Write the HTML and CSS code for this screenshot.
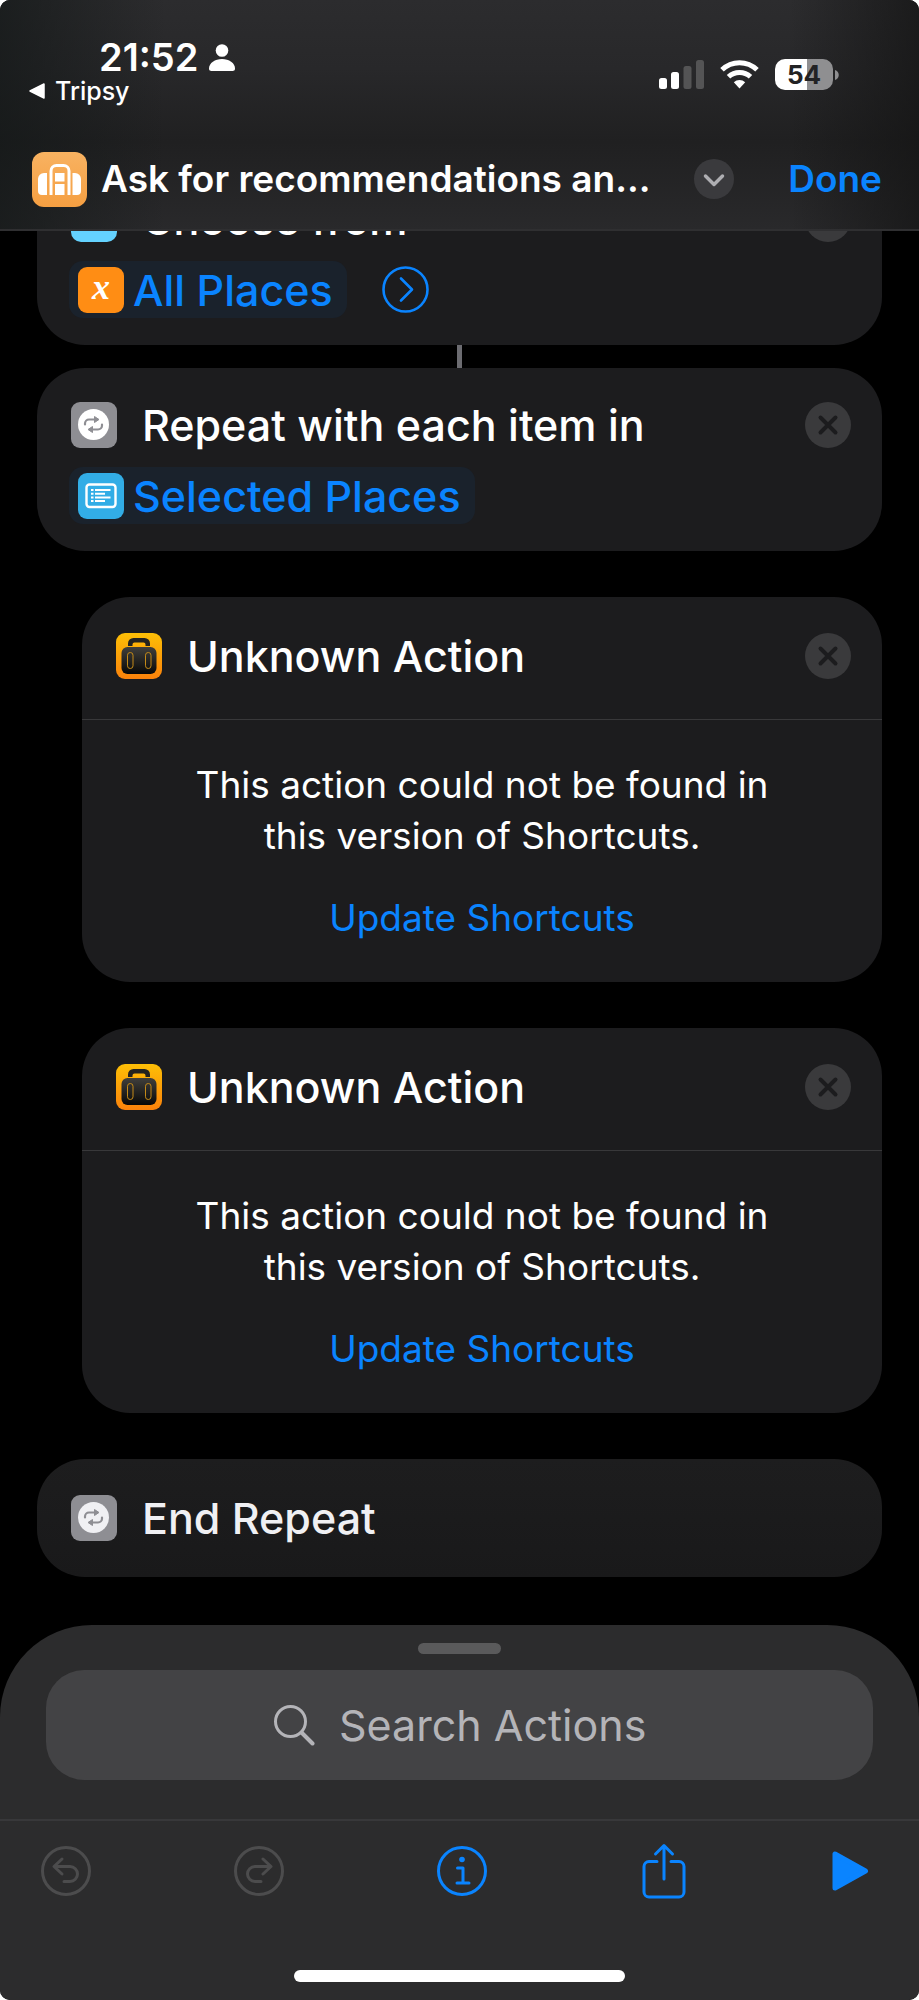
FILE: index.html
```html
<!DOCTYPE html>
<html lang="en">
<head>
<meta charset="utf-8">
<meta name="viewport" content="width=device-width, initial-scale=1">
<title>Shortcuts</title>
<link rel="stylesheet" href="styles.css">
</head>
<body>
<svg class="defs" aria-hidden="true">
  <defs>
    <linearGradient id="peach" x1="0" y1="0" x2="0" y2="1"><stop offset="0" stop-color="#f8b261"/><stop offset="1" stop-color="#f59f42"/></linearGradient>
    <linearGradient id="amber" x1="0" y1="0" x2="0" y2="1"><stop offset="0" stop-color="#fdbf06"/><stop offset="1" stop-color="#fb820b"/></linearGradient>
    <linearGradient id="leather" x1="0" y1="0" x2="0" y2="1"><stop offset="0" stop-color="#403f3c"/><stop offset="1" stop-color="#080808"/></linearGradient>
    <symbol id="repeat" viewBox="0 0 46 46">
      <rect width="46" height="46" rx="9" fill="#8e8e93"/>
      <circle cx="22.500" cy="22.500" r="15.500" fill="currentColor"/>
      <g fill="none" stroke="#8e8e93" stroke-width="2.200" stroke-linecap="round">
        <path d="M14 22.500v-1a4 4 0 0 1 4-4h6M31 22.500v1a4 4 0 0 1-4 4h-6"/>
      </g>
      <path d="M23.500 14.500l4.500 3-4.500 3zM21.500 24.500l-4.500 3 4.500 3z" fill="#8e8e93" stroke="#8e8e93" stroke-linejoin="round"/>
    </symbol>
    <symbol id="close" viewBox="0 0 46 46">
      <circle cx="23" cy="23" r="23" fill="#3a3a3c"/>
      <path d="M15.500 15.500l15 15M30.500 15.500l-15 15" stroke="#1c1c1e" stroke-width="4" stroke-linecap="round"/>
    </symbol>
    <symbol id="suitcase" viewBox="0 0 46 46">
      <rect width="46" height="46" rx="9" fill="url(#amber)"/>
      <path d="M12 13v-2.500a5.500 5.500 0 0 1 5.500-5.500h11a5.500 5.500 0 0 1 5.500 5.500V13h-4.500v-1.500a2 2 0 0 0-2-2h-9a2 2 0 0 0-2 2V13z" fill="#23221f"/>
      <rect x="5.500" y="14" width="35" height="27" rx="6" fill="url(#leather)"/>
      <g fill="none" stroke="#c48a18" stroke-width="1"><rect x="11.500" y="19.500" width="5.500" height="16" rx="2.700"/><rect x="29.500" y="19.500" width="5.500" height="16" rx="2.700"/></g>
    </symbol>
  </defs>
</svg>
<div class="app">
  <header class="header">
    <div class="status">
      <div class="status-left">
        <div class="clock">21:52
          <svg class="person" viewBox="0 0 26 27" fill="#fff" aria-hidden="true"><circle cx="13" cy="6.500" r="6.300"/><path d="M0 24.500C0 19 6 15 13 15s13 4 13 9.500c0 1.800-1 2.500-2.500 2.500h-21C1 27 0 26.300 0 24.500z"/></svg>
        </div>
        <a class="back" href="#"><svg class="back-arrow" viewBox="0 0 16 16" aria-hidden="true"><path d="M1 8L15 1v14z" fill="#fff" stroke="#fff" stroke-width="1.500" stroke-linejoin="round"/></svg>Tripsy</a>
      </div>
      <div class="status-right">
        <svg class="signal" viewBox="0 0 45 29" aria-hidden="true"><g fill="#fff"><rect y="18" width="8" height="11" rx="2.500"/><rect x="12" y="12" width="8" height="17" rx="2.500"/></g><g fill="#545455"><rect x="24.500" y="6" width="8" height="23" rx="2.500"/><rect x="37" width="8" height="29" rx="2.500"/></g></svg>
        <svg class="wifi" viewBox="0 0 39 29" aria-hidden="true"><g fill="none" stroke="#fff" stroke-width="5"><path d="M2 9.800a25 25 0 0 1 35 0"/><path d="M8.500 16.800a16 16 0 0 1 22 0"/></g><path d="M13.800 22.200a8.300 8.300 0 0 1 11.400 0L19.500 28.500z" fill="#fff"/></svg>
        <div class="battery"><span class="battery-level">54</span><svg class="battery-tip" viewBox="0 0 4 10" aria-hidden="true"><path d="M0 0c5 1.500 5 8.500 0 10z" fill="#8f8f91"/></svg></div>
      </div>
    </div>
    <div class="titlebar">
      <svg class="app-icon" viewBox="0 0 55 55" aria-hidden="true">
        <rect width="55" height="55" rx="12" fill="url(#peach)"/>
        <g fill="#fff"><path d="M15 21v22h-5a4 4 0 0 1-4-4V27a6 6 0 0 1 6-6zM40.500 21v22H45a4 4 0 0 0 4-4V27a6 6 0 0 0-6-6z"/><rect x="23" y="21" width="9.500" height="8.500"/><rect x="23" y="32" width="9.500" height="11"/></g>
        <path d="M19 43V19a5.500 5.500 0 0 1 5.500-5.500h7A5.500 5.500 0 0 1 37 19v24" fill="none" stroke="#fff" stroke-width="3"/>
      </svg>
      <h1 class="title">Ask for recommendations an...</h1>
      <button class="icon-btn" type="button" aria-label="Shortcut options"><svg class="chevron" viewBox="0 0 40 40"><circle cx="20" cy="20" r="20" fill="#3a3a3d"/><path d="M11.500 17L20 25.500 28.500 17" fill="none" stroke="#aeaeb2" stroke-width="3.500" stroke-linecap="round" stroke-linejoin="round"/></svg></button>
      <button class="done" type="button">Done</button>
    </div>
  </header>

  <main class="actions">
    <section class="card card-param">
      <div class="row">
        <svg class="icon" viewBox="0 0 46 46" aria-hidden="true"><rect width="46" height="46" rx="10" fill="#64d2ff"/><path d="M11 33h24" stroke="#fff" stroke-width="3"/></svg>
        <span class="name">Choose from</span>
        <button class="icon-btn" type="button" aria-label="Remove action"><svg class="icon"><use href="#close"/></svg></button>
      </div>
      <div class="row-token">
        <button class="token" type="button">
          <svg class="icon" viewBox="0 0 46 46" aria-hidden="true"><rect width="46" height="46" rx="9" fill="#ff8d14"/><text class="var-x" x="23" y="32" text-anchor="middle">x</text></svg>All Places</button>
        <button class="icon-btn" type="button" aria-label="Show more"><svg class="more" viewBox="0 0 47 47" fill="none" stroke="#0a84ff" stroke-width="2.600" stroke-linecap="round" stroke-linejoin="round"><circle cx="23.500" cy="23.500" r="22"/><path d="M19 12.500L30 23.500 19 34.500"/></svg></button>
      </div>
    </section>
    <div class="link-line"></div>
    <section class="card card-param">
      <div class="row">
        <svg class="icon" aria-hidden="true"><use href="#repeat"/></svg>
        <span class="name">Repeat with each item in</span>
        <button class="icon-btn" type="button" aria-label="Remove action"><svg class="icon"><use href="#close"/></svg></button>
      </div>
      <div class="row-token">
        <button class="token" type="button">
          <svg class="icon" viewBox="0 0 46 46" aria-hidden="true"><rect width="46" height="46" rx="9" fill="#32ade6"/><rect x="8.500" y="11.500" width="29" height="22.500" rx="3" fill="none" stroke="#fff" stroke-width="2.400"/><path d="M17 17h15.500M17 20.700h10M17 24.400h15.500M17 28.100h10" stroke="#fff" stroke-width="2"/><path d="M13 17h2.500M13 20.700h2.500M13 24.400h2.500M13 28.100h2.500" stroke="#fff" stroke-width="2"/></svg>Selected Places</button>
      </div>
    </section>

    <section class="card nested">
      <div class="row row-head">
        <svg class="icon" aria-hidden="true"><use href="#suitcase"/></svg>
        <span class="name">Unknown Action</span>
        <button class="icon-btn" type="button" aria-label="Remove action"><svg class="icon"><use href="#close"/></svg></button>
      </div>
      <div class="message">
        <p class="message-text">This action could not be found in<br>this version of Shortcuts.</p>
        <a class="update" href="#">Update Shortcuts</a>
      </div>
    </section>

    <section class="card nested">
      <div class="row row-head">
        <svg class="icon" aria-hidden="true"><use href="#suitcase"/></svg>
        <span class="name">Unknown Action</span>
        <button class="icon-btn" type="button" aria-label="Remove action"><svg class="icon"><use href="#close"/></svg></button>
      </div>
      <div class="message">
        <p class="message-text">This action could not be found in<br>this version of Shortcuts.</p>
        <a class="update" href="#">Update Shortcuts</a>
      </div>
    </section>

    <section class="card card-end">
      <div class="row">
        <svg class="icon" aria-hidden="true"><use href="#repeat"/></svg>
        <span class="name">End Repeat</span>
      </div>
    </section>
  </main>

  <footer class="sheet">
    <div class="grabber"></div>
    <label class="search">
      <svg class="search-icon" viewBox="0 0 41 41" fill="none" stroke="#b4b4b8" stroke-linecap="round" aria-hidden="true"><circle cx="16.500" cy="16.500" r="15" stroke-width="3"/><path d="M28 28l10.500 10.500" stroke-width="4"/></svg>
      <input class="search-input" type="text" placeholder="Search Actions" aria-label="Search Actions">
    </label>
    <nav class="toolbar">
      <button class="icon-btn muted" type="button" aria-label="Undo" disabled><svg class="tool" viewBox="0 0 50 50"><circle cx="25" cy="25" r="23.500"/><path d="M21 13l-8 7.500 8 7.500M13.500 20.500H29a7.500 7.500 0 0 1 0 15h-6"/></svg></button>
      <button class="icon-btn muted" type="button" aria-label="Redo" disabled><svg class="tool" viewBox="0 0 50 50"><circle cx="25" cy="25" r="23.500"/><path d="M29 13l8 7.500-8 7.500M36.500 20.500H21a7.500 7.500 0 0 0 0 15h6"/></svg></button>
      <button class="icon-btn info" type="button" aria-label="Details"><svg class="tool" viewBox="0 0 50 50"><circle cx="25" cy="25" r="23.500"/><path d="M20.500 22H26v15M20 37h12"/><circle cx="25" cy="13.500" r="2.800" fill="currentColor" stroke="none"/></svg></button>
      <button class="icon-btn" type="button" aria-label="Share"><svg class="tool share" viewBox="0 0 48 56"><path d="M17 18.500H9a5 5 0 0 0-5 5V49a5 5 0 0 0 5 5h30a5 5 0 0 0 5-5V23.500a5 5 0 0 0-5-5h-8M24 36V3M15.500 11L24 2.500 32.500 11"/></svg></button>
      <button class="icon-btn" type="button" aria-label="Run"><svg class="tool play" viewBox="0 0 38 42"><path d="M4 4v34L34.500 21z" fill="currentColor" stroke-width="5"/></svg></button>
    </nav>
    <div class="home-bar"></div>
  </footer>
</div>
</body>
</html>
```
FILE: styles.css
```css
* { box-sizing: border-box; }
body {
  margin: 0;
  background: #fff;
  color: #fff;
  font-family: Inter, "Liberation Sans", sans-serif;
}
svg { display: block; flex: none; }
button {
  margin: 0;
  padding: 0;
  border: 0;
  background: none;
  color: inherit;
  font: inherit;
}
a { text-decoration: none; color: inherit; }
.defs { position: absolute; width: 0; height: 0; }

.app {
  display: flex;
  flex-direction: column;
  height: 100vh;
  overflow: hidden;
  border-radius: 10px;
  background: #000;
}

.header {
  flex: none;
  padding-bottom: 22px;
  border-bottom: 2px solid #2f2f31;
  background:
    linear-gradient(90deg, rgba(20, 24, 24, .7), transparent 18%, transparent 86%, rgba(20, 20, 20, .7)),
    linear-gradient(#2c2c2e, #28282a 30%, #202021 62%, #29292b);
}
.status {
  display: flex;
  justify-content: space-between;
  padding: 38px 80px 0 29px;
}
.clock {
  display: flex;
  align-items: center;
  gap: 11px;
  padding-left: 70px;
  font-size: 38px;
  font-weight: 600;
  line-height: 38px;
}
.person { width: 26px; height: 27px; }
.back {
  display: flex;
  align-items: center;
  gap: 10px;
  font-size: 25px;
  font-weight: 500;
  line-height: 30px;
}
.back-arrow { width: 16px; height: 16px; }
.status-right {
  display: flex;
  align-items: center;
  gap: 16px;
  height: 73px;
}
.signal { width: 45px; height: 29px; }
.wifi { width: 39px; height: 29px; }
.battery { display: flex; align-items: center; gap: 2px; }
.battery-level {
  width: 58px;
  border-radius: 10px;
  background: linear-gradient(90deg, #fff 55%, #8f8f91 55%);
  color: #222224;
  font-size: 26px;
  font-weight: 700;
  line-height: 31px;
  text-align: center;
}
.battery-tip { width: 4px; height: 10px; }

.titlebar {
  display: flex;
  align-items: center;
  margin-top: 40px;
  padding: 0 37px 0 32px;
}
.app-icon { width: 55px; height: 55px; margin-right: 14px; }
.title {
  flex: 1;
  min-width: 0;
  margin: 0;
  overflow: hidden;
  font-size: 37px;
  font-weight: 600;
  line-height: 56px;
  white-space: nowrap;
}
.chevron { width: 40px; height: 40px; }
.done {
  margin-left: 54px;
  color: #0a84ff;
  font-size: 37px;
  font-weight: 600;
  line-height: 56px;
}

.actions {
  display: flex;
  flex: 1;
  flex-direction: column;
  justify-content: flex-end;
  min-height: 0;
  overflow: hidden;
  padding: 0 37px 48px;
}
.card {
  flex: none;
  border-radius: 48px;
  background: #1c1c1e;
}
.card-param { padding: 28px 31px 27px 32px; }
.link-line {
  flex: none;
  align-self: center;
  width: 5px;
  height: 23px;
  background: #6c6c71;
}
.row {
  display: flex;
  align-items: center;
  min-height: 57px;
  padding-left: 2px;
}
.icon { width: 46px; height: 46px; }
.name {
  flex: 1;
  padding-left: 25px;
  font-size: 43px;
  font-weight: 500;
  line-height: 56px;
  white-space: nowrap;
}
.row-token {
  display: flex;
  align-items: center;
  gap: 35px;
  margin-top: 14px;
}
.token {
  display: flex;
  align-items: center;
  gap: 9px;
  height: 57px;
  padding: 0 14px 0 9px;
  border-radius: 14px;
  background: #1a222c;
  color: #0a84ff;
  font-size: 43px;
  font-weight: 500;
  white-space: nowrap;
}
.var-x {
  fill: #fff;
  font: italic bold 36px "Liberation Serif", serif;
}
.more { width: 47px; height: 47px; }
.nested { margin: 46px 0 0 45px; }
.row-head {
  min-height: 123px;
  padding: 0 31px 4px 34px;
  border-bottom: 1px solid #38383a;
}
.message {
  padding: 39px 32px;
  font-size: 37px;
  line-height: 51px;
  text-align: center;
}
.message-text { margin: 0 0 31px; }
.update { display: block; color: #0a84ff; }
.card-end {
  margin-top: 46px;
  padding: 30px 32px 31px;
  background: linear-gradient(#1d1d1e, #19191a);
  color: #f0f0f3;
}

.sheet {
  flex: none;
  padding: 18px 0;
  border-radius: 92px 92px 0 0;
  background: #2c2c2d;
}
.grabber {
  width: 83px;
  height: 11px;
  margin: 0 auto 16px;
  border-radius: 6px;
  background: #5a5a5b;
}
.search {
  display: flex;
  align-items: center;
  justify-content: center;
  gap: 24px;
  height: 110px;
  margin: 0 46px 39px;
  border-radius: 38px;
  background: #434345;
}
.search-icon { width: 41px; height: 41px; }
.search-input {
  width: 306px;
  padding: 0;
  border: 0;
  outline: 0;
  appearance: none;
  background: none;
  color: #fff;
  font: 400 43px/56px Inter, "Liberation Sans", sans-serif;
}
.search-input::placeholder { color: #b4b4b8; opacity: 1; }
.toolbar {
  display: flex;
  align-items: center;
  justify-content: space-between;
  height: 102px;
  padding: 0 50px 0 41px;
  border-top: 2px solid #38383a;
  color: #0a84ff;
}
.tool {
  width: 50px;
  height: 50px;
  fill: none;
  stroke: currentColor;
  stroke-width: 3;
  stroke-linecap: round;
  stroke-linejoin: round;
}
.muted { color: #4c4c4d; }
.info { padding: 0 10px; }
.share { width: 48px; height: 56px; }
.play { width: 38px; height: 42px; }
.home-bar {
  width: 36%;
  height: 12px;
  margin: 49px auto 0;
  border-radius: 6px;
  background: #fff;
}
```
